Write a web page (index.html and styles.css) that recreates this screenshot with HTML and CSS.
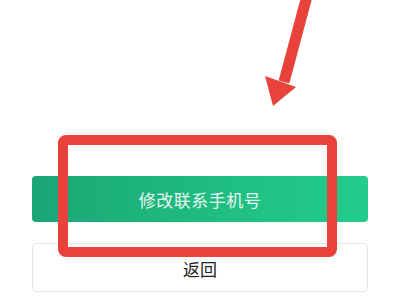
FILE: index.html
```html
<!DOCTYPE html>
<html lang="zh">
<head>
<meta charset="utf-8">
<link rel="stylesheet" href="styles.css">
</head>
<body>
<div class="page">
  <div class="btn btn-primary">修改联系手机号</div>
  <div class="btn btn-secondary">返回</div>
</div>
<svg class="overlay" width="400" height="301" viewBox="0 0 400 301">
  <rect x="63" y="140" width="269" height="112" rx="3" fill="none" stroke="#e8423a" stroke-width="10"/>
  <line x1="307" y1="-4" x2="284" y2="82" stroke="#e8423a" stroke-width="11"/>
  <polygon points="265,76 296,87 273,106" fill="#e8423a"/>
</svg>
</body>
</html>
```
FILE: styles.css
```css
html, body {
  margin: 0;
  padding: 0;
  background: #ffffff;
}
body {
  width: 400px;
  height: 301px;
  overflow: hidden;
  position: relative;
  font-family: "Noto Sans CJK SC", "Noto Sans", sans-serif;
}
.page {
  display: flex;
  flex-direction: column;
  gap: 21px;
  padding: 176px 32px 0 32px;
}
.btn {
  display: flex;
  align-items: center;
  justify-content: center;
  border-radius: 4px;
  font-size: 17px;
  box-sizing: border-box;
}
.btn-primary {
  height: 46px;
  background: linear-gradient(90deg, #1aa675 0%, #1fbd82 55%, #22cc8c 100%);
  color: #e6f7ef;
  letter-spacing: 0.5px;
}
.btn-secondary {
  height: 49px;
  background: #ffffff;
  border: 1px solid #e6e6e6;
  color: #222222;
  padding-top: 2px;
}
.overlay {
  position: absolute;
  left: 0;
  top: 0;
}
```
